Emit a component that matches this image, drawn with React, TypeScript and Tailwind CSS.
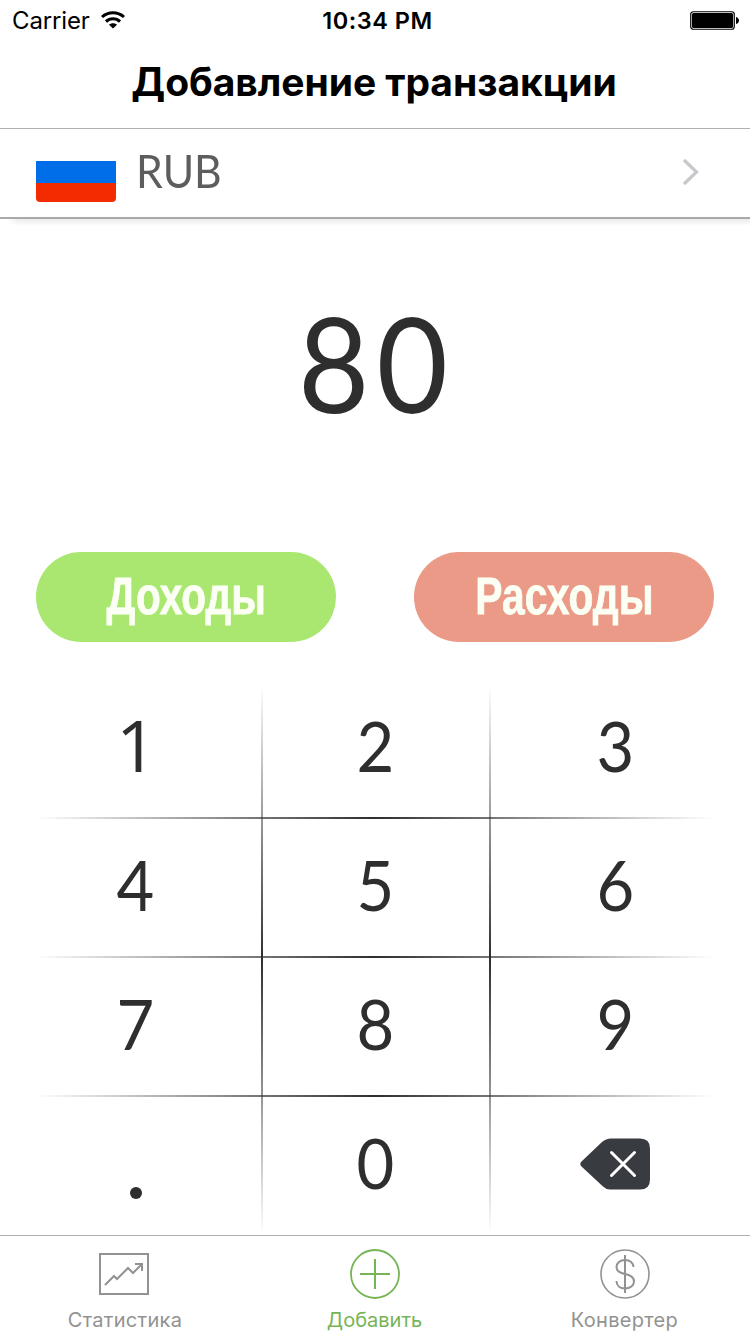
import React from "react";

const KEYS = ["1", "2", "3", "4", "5", "6", "7", "8", "9", ".", "0", "back"];

function StatusBar() {
  return (
    <div className="flex h-10 items-center justify-between pl-3 pr-[11px] pt-[2px] text-[24px] leading-10 text-black">
      <div className="flex w-[200px] items-center">
        <span className="w-[89px] tracking-[-0.150px]">Carrier</span>
        <svg className="-mt-[2px]" width="24" height="18" viewBox="0 0 24 18" fill="none" stroke="#000" strokeWidth="3">
          <path d="M1 6C7.200.400 16.800.400 23 6" />
          <path d="M5 10.600c4-3.800 10-3.800 14 0" />
          <path d="M12 17.600 8 13.800c2.300-2 5.700-2 8 0z" fill="#000" stroke="none" />
        </svg>
      </div>
      <span className="ml-[4px] text-[23.500px] font-semibold tracking-[0.500px]">10:34 PM</span>
      <div className="flex w-[200px] justify-end">
        <svg className="-mt-[2px]" width="49" height="19" viewBox="0 0 49 19">
          <rect x="0.75" y="0.75" width="43.500" height="17.500" rx="2.500" fill="#fff" stroke="#000" strokeWidth="1.200" />
          <rect x="2" y="2" width="41" height="15" rx="1.500" />
          <path d="M46 6c4 1 4 6 0 7z" />
        </svg>
      </div>
    </div>
  );
}

function CurrencyRow() {
  return (
    <div className="relative z-10 flex h-[90px] items-start border-b-2 border-[#a9a9a9] pl-9 pr-[51px]">
      <div className="mt-[13px] flex h-[60px] w-20 flex-col overflow-hidden rounded-[4px]">
        <div className="h-[19px] bg-white" />
        <div className="h-[22px] bg-[#006de9]" />
        <div className="flex-1 bg-[#f22b00]" />
      </div>
      <span className="ml-[20px] mt-[12px] flex-1 origin-left scale-x-[0.930] font-['Lato',sans-serif] text-[46px] leading-[60px] text-[#5c5d5f]">
        RUB
      </span>
      <svg className="mt-[29px]" width="17" height="28" viewBox="0 0 17 28" fill="none" stroke="#c7c7cc" strokeWidth="3.200">
        <path d="m2 2 12.500 12L2 26" />
      </svg>
      <div className="absolute left-2 right-0 top-[90px] h-[7px] bg-gradient-to-b from-black/[0.080] to-transparent [mask-image:linear-gradient(to_right,transparent,#000_10px)]" />
    </div>
  );
}

function Key({ label }: { label: string }) {
  if (label === "back") {
    return (
      <svg width="70" height="52" viewBox="0 0 70 52">
        <path d="M1.500 23.500 22 4Q26 .5 31 .5h29q10 0 10 10v31q0 10-10 10H30q-4 0-7-3L1.500 28.500Q-1 26 1.500 23.500z" fill="#383b40" />
        <path d="m31.500 14.500 23 23m0-23-23 23" stroke="#fff" strokeWidth="3" strokeLinecap="round" />
      </svg>
    );
  }
  if (label === ".") {
    return <span className="mt-[58px] ml-px size-[12px] rounded-full bg-[#2e2e2e]" />;
  }
  if (label === "1") {
    return <span className="-mt-[5px] ml-[3px] font-['Open_Sans',sans-serif] text-[72px] font-normal">1</span>;
  }
  return <span className="-mt-[4px] scale-x-[0.930]">{label}</span>;
}

function Keypad() {
  return (
    <div className="relative h-[557px] px-[15px]">
      <div className="grid grid-cols-3 font-['Lato',sans-serif] text-[70px] text-[#2e2e2e]">
        {KEYS.map((k) => (
          <button key={k} className="flex h-[139px] items-center justify-center leading-none">
            <Key label={k} />
          </button>
        ))}
      </div>
      <div className="pointer-events-none absolute left-[261px] top-2 h-[549px] w-[2px] bg-gradient-to-b from-transparent via-[#2e2e2e] to-transparent" />
      <div className="pointer-events-none absolute left-[489px] top-2 h-[549px] w-[2px] bg-gradient-to-b from-transparent via-[#2e2e2e] to-transparent" />
      <div className="pointer-events-none absolute left-9 right-9 top-[140px] h-[2px] bg-gradient-to-r from-transparent via-[#2e2e2e] to-transparent" />
      <div className="pointer-events-none absolute left-9 right-9 top-[279px] h-[2px] bg-gradient-to-r from-transparent via-[#2e2e2e] to-transparent" />
      <div className="pointer-events-none absolute left-9 right-9 top-[418px] h-[2px] bg-gradient-to-r from-transparent via-[#2e2e2e] to-transparent" />
    </div>
  );
}

function TabBar() {
  return (
    <nav className="grid h-[99px] grid-cols-3 border-t border-[#b0b0b0] text-[20px] leading-6 tracking-[0.300px] text-[#929292]">
      <div className="flex flex-col items-center">
        <svg className="mr-[2px] mt-[13px]" width="50" height="50" viewBox="0 0 50 50" fill="none" stroke="currentColor" strokeWidth="2">
          <path d="M1 5h48v40H1z" />
          <path d="m6 36 9-9 3 3 11-11 5 5 9-9M36 15h7v7" />
        </svg>
        <span className="mt-[9px]">Статистика</span>
      </div>
      <div className="flex flex-col items-center text-[#76b456]">
        <svg className="mt-[13px]" width="50" height="50" viewBox="0 0 50 50" fill="none" stroke="currentColor" strokeWidth="2">
          <circle cx="25" cy="25" r="24" strokeWidth="1.800" />
          <path d="M25 10v30M10 25h30" />
        </svg>
        <span className="mt-[9px] mr-px tracking-normal">Добавить</span>
      </div>
      <div className="flex flex-col items-center">
        <svg className="mt-[13px]" width="50" height="50" viewBox="0 0 50 50" fill="none" stroke="currentColor" strokeWidth="2">
          <circle cx="25" cy="25" r="24" strokeWidth="1.600" />
          <path d="M25 6v38M33.500 18c0-4-3.500-7-8.500-7s-8.500 3-8.500 7c0 4.500 3.500 6 8.500 7s9 3 9 7.500c0 4-4 7-9 7s-8.500-3-8.500-7.500" />
        </svg>
        <span className="mt-[9px] mr-px">Конвертер</span>
      </div>
    </nav>
  );
}

export default function App() {
  return (
    <div className="flex h-[1334px] w-[750px] flex-col overflow-hidden bg-white font-['Inter',sans-serif]">
      <StatusBar />
      <header className="flex h-[89px] items-center justify-center border-b border-[#b0b0b0] pb-[6px]">
        <h1 className="-ml-[2px] whitespace-nowrap text-[39px] font-bold leading-none tracking-[-0.050px] text-black">Добавление транзакции</h1>
      </header>
      <CurrencyRow />
      <div className="flex h-[333px] items-center justify-center pb-[46px] font-['Lato',sans-serif] text-[131px] leading-none text-[#2e2e2e]">
        <span className="-mr-[3px] scale-x-[0.940] tracking-[7.500px]">80</span>
      </div>
      <div className="flex h-[90px] justify-between px-9 font-['Liberation_Sans',sans-serif] text-[51px] font-bold leading-[89px] text-[#fbfff4] [-webkit-text-stroke:0.800px_#fbfff4]">
        <button className="flex w-[300px] justify-center rounded-full bg-[#a9e770]">
          <span className="block scale-x-[0.795]">Доходы</span>
        </button>
        <button className="flex w-[300px] justify-center rounded-full bg-[#ea9a86]">
          <span className="block scale-x-[0.800]">Расходы</span>
        </button>
      </div>
      <div className="h-[35px]" />
      <Keypad />
      <div className="flex-1" />
      <TabBar />
    </div>
  );
}
